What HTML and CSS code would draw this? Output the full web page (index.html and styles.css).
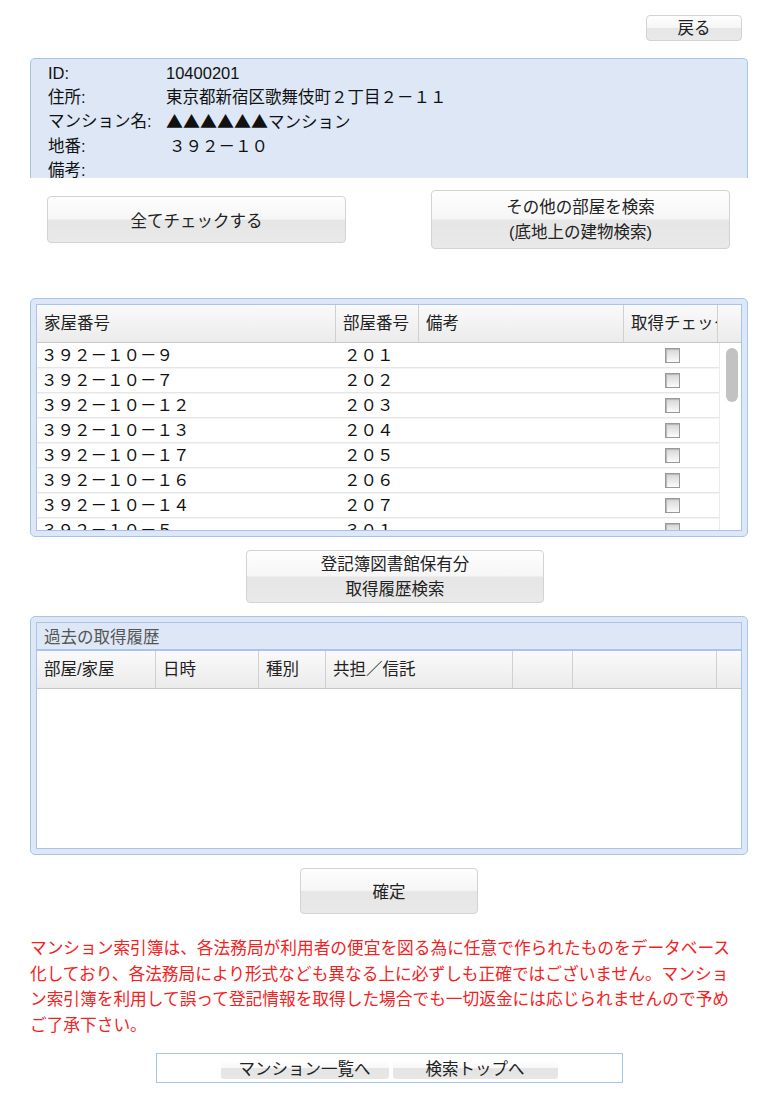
FILE: index.html
```html
<!DOCTYPE html>
<html lang="ja">
<head>
    <meta charset="UTF-8">
    <meta name="viewport" content="width=device-width, initial-scale=1.0">
    <title>マンション部屋一覧</title>
    <link rel="stylesheet" href="styles.css">
</head>
<body>
<div class="page">
    <div class="top-bar">
        <button class="btn btn-back">戻る</button>
    </div>

    <!-- 物件情報 -->
    <div class="panel info-panel">
        <div class="info">
            <div class="info-label">ID:</div><div>10400201</div>
            <div class="info-label">住所:</div><div>東京都新宿区歌舞伎町２丁目２－１１</div>
            <div class="info-label">マンション名:</div><div><span class="marks">▲▲▲▲▲▲</span>マンション</div>
            <div class="info-label">地番:</div><div class="info-num">３９２－１０</div>
            <div class="info-label">備考:</div><div></div>
        </div>
    </div>

    <div class="actions">
        <button class="btn btn-wide">全てチェックする</button>
        <button class="btn btn-tall">その他の部屋を検索<br>(底地上の建物検索)</button>
    </div>

    <!-- 部屋一覧 -->
    <div class="panel grid-panel">
        <div class="grid-box">
            <div class="room-head">
                <div class="head-cell">家屋番号</div>
                <div class="head-cell">部屋番号</div>
                <div class="head-cell">備考</div>
                <div class="head-cell">取得チェック</div>
                <div class="head-cell"></div>
            </div>
            <div class="room-body">
                <div class="room-rows">
                    <div class="room-row"><div>３９２－１０－９</div><div>２０１</div><div></div><div class="check-cell"><span class="checkbox"></span></div></div>
                    <div class="room-row"><div>３９２－１０－７</div><div>２０２</div><div></div><div class="check-cell"><span class="checkbox"></span></div></div>
                    <div class="room-row"><div>３９２－１０－１２</div><div>２０３</div><div></div><div class="check-cell"><span class="checkbox"></span></div></div>
                    <div class="room-row"><div>３９２－１０－１３</div><div>２０４</div><div></div><div class="check-cell"><span class="checkbox"></span></div></div>
                    <div class="room-row"><div>３９２－１０－１７</div><div>２０５</div><div></div><div class="check-cell"><span class="checkbox"></span></div></div>
                    <div class="room-row"><div>３９２－１０－１６</div><div>２０６</div><div></div><div class="check-cell"><span class="checkbox"></span></div></div>
                    <div class="room-row"><div>３９２－１０－１４</div><div>２０７</div><div></div><div class="check-cell"><span class="checkbox"></span></div></div>
                    <div class="room-row"><div>３９２－１０－５</div><div>３０１</div><div></div><div class="check-cell"><span class="checkbox"></span></div></div>
                </div>
                <div class="scroll-track"><div class="scroll-thumb"></div></div>
            </div>
        </div>
    </div>

    <button class="btn btn-library">登記簿図書館保有分<br>取得履歴検索</button>

    <!-- 過去の取得履歴 -->
    <div class="panel grid-panel">
        <div class="history-title">過去の取得履歴</div>
        <div class="history-box">
            <div class="history-head">
                <div class="head-cell">部屋/家屋</div>
                <div class="head-cell">日時</div>
                <div class="head-cell">種別</div>
                <div class="head-cell">共担／信託</div>
                <div class="head-cell"></div>
                <div class="head-cell"></div>
                <div class="head-cell"></div>
            </div>
            <div class="history-body"></div>
        </div>
    </div>

    <button class="btn btn-ok">確定</button>

    <p class="notice">マンション索引簿は、各法務局が利用者の便宜を図る為に任意で作られたものをデータベース化しており、各法務局により形式なども異なる上に必ずしも正確ではございません。マンション索引簿を利用して誤って登記情報を取得した場合でも一切返金には応じられませんので予めご了承下さい。</p>

    <div class="bottom-nav">
        <button class="nav-btn nav-list">マンション一覧へ</button>
        <button class="nav-btn nav-top">検索トップへ</button>
    </div>
</div>
</body>
</html>
```

FILE: styles.css
```css
* {
    box-sizing: border-box;
}
body {
    margin: 0;
    font-family: "Liberation Sans", "Noto Sans CJK JP", sans-serif;
    font-size: 16.5px;
    color: #111;
    background: #fff;
}
.page {
    width: 718px;
    margin-left: 30px;
    padding-top: 15px;
}
.top-bar {
    display: flex;
    justify-content: flex-end;
    padding-right: 6px;
}

/* buttons */
.btn {
    font: inherit;
    color: #222;
    padding: 0;
    border: 1px solid #d3d3d3;
    border-radius: 4px;
    background: linear-gradient(to bottom, #fefefe 0%, #f6f6f6 48%, #e6e6e6 52%, #e9e9e9 100%);
    display: block;
}
.btn-back {
    width: 96px;
    height: 26px;
    line-height: 24px;
}
.btn-wide {
    width: 299px;
    height: 47px;
}
.btn-tall {
    width: 299px;
    height: 59px;
    line-height: 25px;
}
.btn-library {
    width: 298px;
    height: 53px;
    line-height: 25px;
    margin: 13px 0 0 216px;
}
.btn-ok {
    width: 178px;
    height: 46px;
    margin: 13px auto 0;
}

/* panels */
.panel {
    background: #dde7f5;
    border: 1px solid #a9c4ec;
    border-radius: 5px;
}
.info-panel {
    margin-top: 17px;
    height: 120px;
    overflow: hidden;
    border-bottom: none;
    border-radius: 5px 5px 0 0;
    padding: 2px 17px 0;
}
.info {
    display: grid;
    grid-template-columns: 118px 1fr;
    line-height: 24px;
}
.marks {
    font-family: "Noto Sans CJK JP", sans-serif;
    font-size: 17px;
}
.info-num {
    padding-left: 3px;
}
.actions {
    display: flex;
    justify-content: space-between;
    align-items: center;
    margin-top: 12px;
    padding: 0 18px 0 17px;
}
.grid-panel {
    margin-top: 13px;
    height: 239px;
    padding: 5px;
}
.actions + .grid-panel {
    margin-top: 49px;
}
.grid-box,
.history-box {
    background: #fff;
    border: 1px solid #a9c4ec;
}
.grid-box {
    height: 227px;
}

/* table header */
.room-head,
.history-head {
    display: grid;
    height: 38px;
    background: linear-gradient(to bottom, #fafafa, #ebebeb);
    border-bottom: 1px solid #c8c8c8;
}
.room-head {
    grid-template-columns: 299px 83px 205px 94px 1fr;
}
.history-head {
    grid-template-columns: 119px 103px 67px 187px 60px 144px 1fr;
}
.head-cell {
    padding-left: 7px;
    line-height: 37px;
    color: #222;
    border-right: 1px solid #d0d0d0;
    white-space: nowrap;
    overflow: hidden;
}
.head-cell:last-child {
    border-right: none;
}

/* room rows */
.room-body {
    display: flex;
    height: 187px;
}
.room-rows {
    flex: 1;
    overflow: hidden;
}
.room-row {
    display: grid;
    grid-template-columns: 299px 83px 205px 94px;
    height: 25px;
    line-height: 24px;
    border-bottom: 1px solid #e6e6e6;
    box-shadow: 0 1px 0 #f4f4f4;
}
.room-row > div:first-child {
    padding-left: 4px;
}
.room-row > div:nth-child(2) {
    padding-left: 8px;
}
.check-cell {
    display: flex;
    align-items: center;
    justify-content: center;
    padding-left: 2px;
}
.checkbox {
    width: 15px;
    height: 15px;
    border: 1px solid #999;
    background: linear-gradient(to bottom, #d6d6d6, #fbfbfb);
    box-shadow: inset 1px 1px 1px #b5b5b5;
}
.scroll-track {
    width: 22px;
    border-left: 1px solid #ececec;
    padding: 5px 3px 0 6px;
}
.scroll-thumb {
    height: 54px;
    border-radius: 6px;
    background: #c2c2c2;
}

/* history */
.history-title {
    height: 29px;
    line-height: 28px;
    padding-left: 7px;
    color: #555;
    background: #dde7f5;
    border: 1px solid #a9c4ec;
    border-bottom-width: 2px;
}
.history-box {
    border-top: none;
    height: 198px;
}
.history-body {
    height: 159px;
}

/* notice */
.notice {
    width: 712px;
    margin: 22px 0 0;
    color: #f5211f;
    font-size: 16.7px;
    line-height: 25.5px;
}
.bottom-nav {
    display: flex;
    justify-content: center;
    gap: 4px;
    width: 467px;
    height: 30px;
    margin: 15px auto 0;
    padding-top: 6px;
    border: 1px solid #a9c4ec;
}
.nav-btn {
    font: inherit;
    color: #222;
    height: 19px;
    line-height: 19px;
    padding: 0;
    border: none;
    border-radius: 3px;
    background: linear-gradient(to bottom, #ffffff 0%, #f8f8f8 40%, #e4e4e4 45%, #e7e7e7 100%);
}
.nav-list {
    width: 168px;
}
.nav-top {
    width: 165px;
}
```
